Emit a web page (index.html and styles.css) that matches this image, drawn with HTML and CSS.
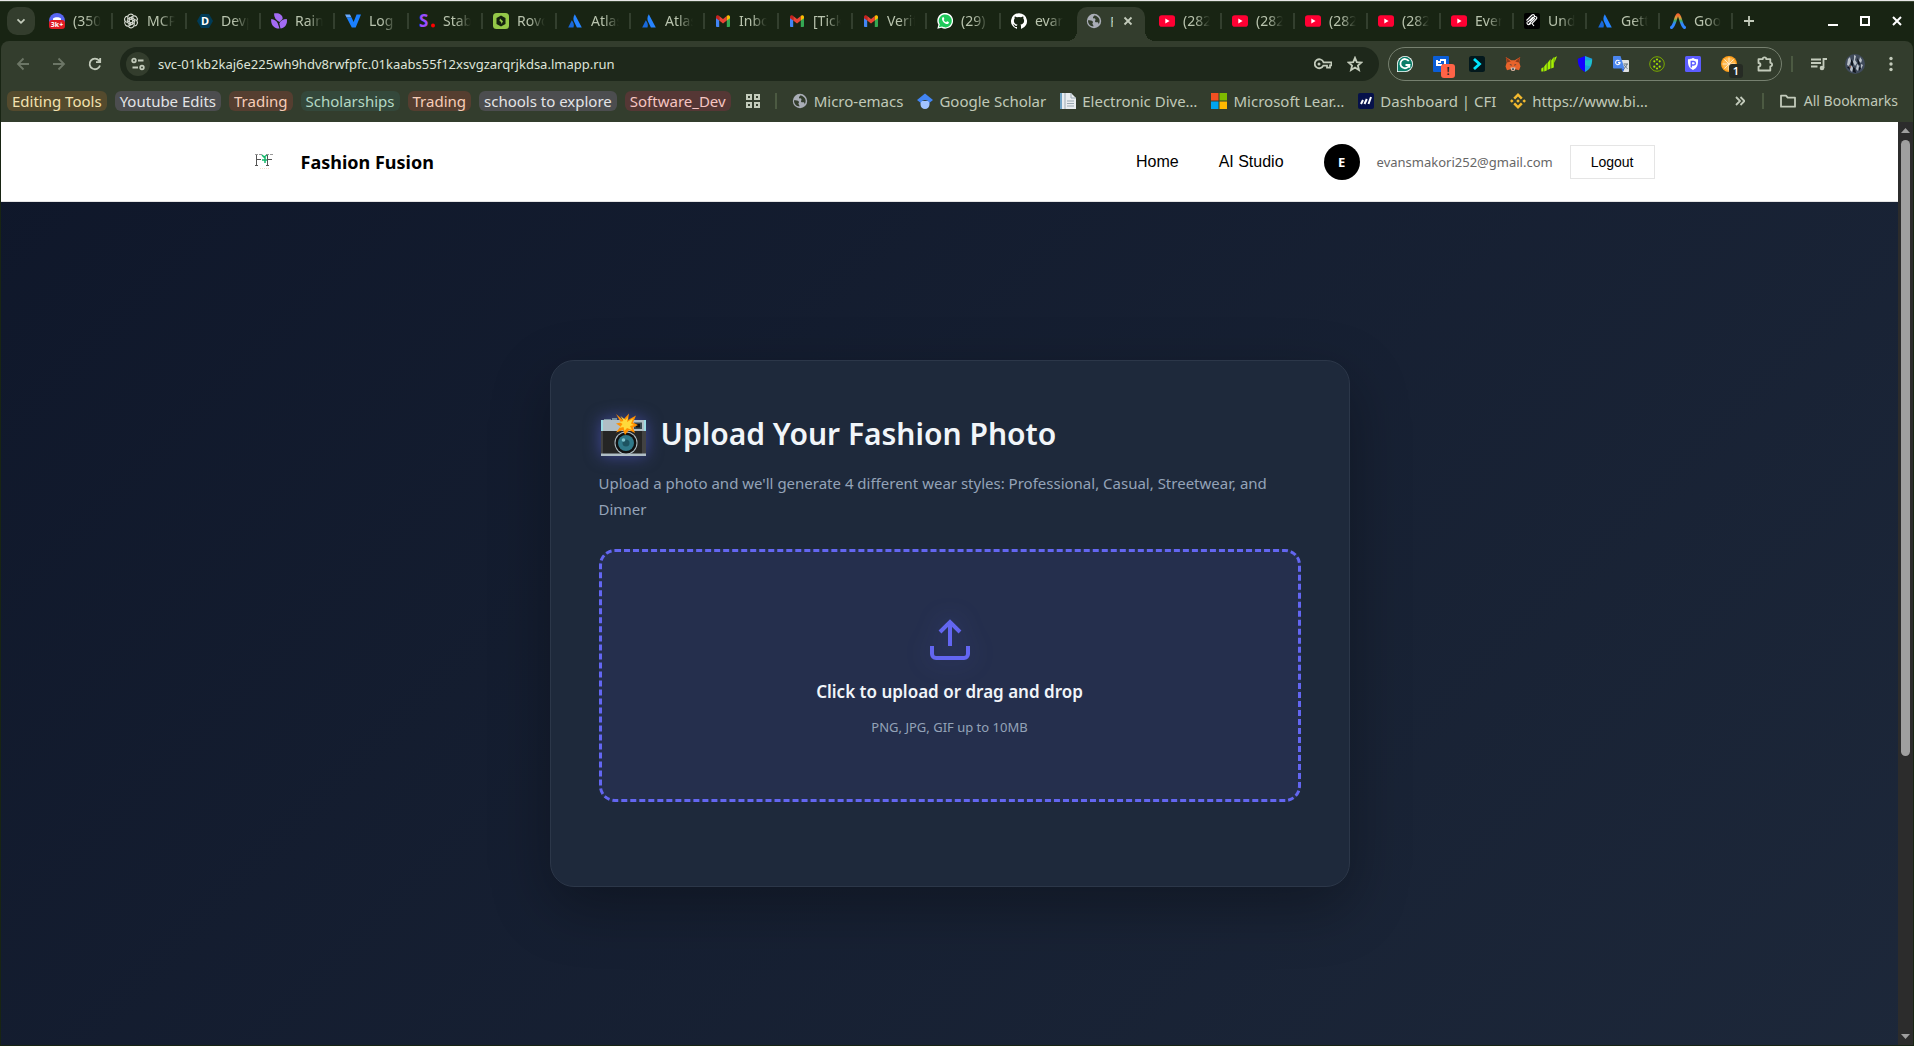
FILE: index.html
```
<!DOCTYPE html>
<html lang="en">
<head>
    <meta charset="UTF-8">
    <title>Fashion Fusion</title>
    <link rel="stylesheet" href="styles.css">
</head>
<body>

<!-- shared icons -->
<svg class="sprite" width="0" height="0" aria-hidden="true">
    <symbol id="atlassian" viewBox="0 0 16 16">
        <path fill="#2684ff" d="M7.800 1.200c-2 3.200-1.600 5.800-.3 8.400l2.400 4.900h4.900z"/>
        <path fill="#1868db" d="M4.800 7.200 1.200 14.500h5.300c.9-2.600.2-5.200-1.700-7.300z"/>
    </symbol>
    <symbol id="gmail" viewBox="0 0 16 16">
        <path fill="#4285f4" d="M1 4v9.200c0 .5.400.8.900.8h2.300V6.500z"/>
        <path fill="#34a853" d="M15 4v9.200c0 .5-.4.8-.9.800h-2.300V6.500z"/>
        <path fill="#ea4335" d="M4.200 3 8 5.900 11.800 3v4.500L8 10.400 4.200 7.500z"/>
        <path fill="#c5221f" d="M1 4c0-1.700 1.800-2.400 3.200-1.200v4.700L1 5.200z"/>
        <path fill="#fbbc04" d="M15 4c0-1.700-1.800-2.400-3.200-1.200v4.700L15 5.200z"/>
    </symbol>
    <symbol id="youtube" viewBox="0 0 16 16">
        <rect y="2.300" width="16" height="11.400" rx="2.800" fill="#ff0033"/>
        <path fill="#fff" d="M6.300 5.600v4.800L10.600 8z"/>
    </symbol>
    <symbol id="globe" viewBox="0 0 16 16">
        <circle cx="8" cy="8" r="7.200" fill="#a9adb6"/>
        <path fill="#333d2d" d="M2 7.200c2 .2 3.800 0 4.800 1.300.8 1.100-.8 1.200-.3 2.500.3.900 1 .8.900 2.400C4.500 13.400 1.800 10.800 2 7.200zM8.500 2.200c-.2 1.400-1.900 1.200-1.500 2.500.3.900 2 .3 2.400 1.400.5 1.300-.9 1.900-.2 2.800.9 1 2.400-.2 3.200 1 .3.500.2 1.100.1 1.500 2.300-3.200 1.300-7.500-4-9.200z"/>
    </symbol>
</svg>

<!-- tab strip -->
<div class="tab-strip">
    <button class="tab-search" aria-label="Search tabs">
        <svg width="12" height="12" viewBox="0 0 12 12"><path class="line" d="M2.500 4.300 6 7.800l3.500-3.500" stroke-width="2"/></svg>
    </button>
    <button class="tab">
        <svg class="favicon" viewBox="0 0 16 16"><circle cx="8" cy="8" r="8" fill="#5865f2"/><path fill="#fff" d="M4 5.500c2-1.600 6-1.600 8 0V8H4z"/><rect y="7" width="16" height="9" rx="3" fill="#e01b24"/><text x="8" y="14" font-size="7" font-weight="bold" fill="#fff" text-anchor="middle">3k+</text></svg>
        <span class="tab-title">(350</span>
    </button>
    <button class="tab">
        <svg class="favicon" viewBox="0 0 16 16"><g fill="none" stroke="#d9ddd5" stroke-width="1.100"><path id="petal" d="M4.800 9.800V4.200a3.100 3.100 0 0 1 5.800-1.500M6.300 7 10.500 4.600"/><use href="#petal" transform="rotate(60 8 8)"/><use href="#petal" transform="rotate(120 8 8)"/><use href="#petal" transform="rotate(180 8 8)"/><use href="#petal" transform="rotate(240 8 8)"/><use href="#petal" transform="rotate(300 8 8)"/></g></svg>
        <span class="tab-title">MCP</span>
    </button>
    <button class="tab">
        <svg class="favicon" viewBox="0 0 16 16"><path fill="#003b57" d="M4 1h8l4 7-4 7H4L0 8z"/><text x="8" y="12" font-size="11" font-weight="bold" fill="#fff" text-anchor="middle">D</text></svg>
        <span class="tab-title">Devp</span>
    </button>
    <button class="tab">
        <svg class="favicon" viewBox="0 0 16 16"><g fill="#a46bf5"><path d="M3 .5c5-1 9 1.500 8.600 5.500L8.500 9C5 7.500 3 4.500 3 .5z"/><path d="M15.800 6c1 5-2 9-6.300 9.500L8.300 10.500C9.500 7.500 12 6 15.800 6z"/><path d="M.3 6c3 .3 5.700 2 6.500 4.500L8.500 15.500C3.500 16-.8 11.500.3 6z"/></g></svg>
        <span class="tab-title">Rain</span>
    </button>
    <button class="tab">
        <svg class="favicon" viewBox="0 0 16 16"><path fill="#68a9ff" d="M0 1.500h5l1.500 3H1.600z"/><path fill="#1a80ff" d="M1.600 4.500h5l2 4.500 3-7.500H16L10.700 14.500H6.800z"/></svg>
        <span class="tab-title">Log</span>
    </button>
    <button class="tab">
        <svg class="favicon" viewBox="0 0 16 16"><text x="0" y="14" font-size="17" font-weight="bold" fill="#9a4dff">S</text><circle cx="14" cy="12.500" r="2" fill="#f00"/></svg>
        <span class="tab-title">Stab</span>
    </button>
    <button class="tab">
        <svg class="favicon" viewBox="0 0 16 16"><rect width="16" height="16" rx="3.500" fill="#94c748"/><path fill="#14200f" d="M8 2.500 12.500 5v6L8 13.500 3.500 11V5z"/><path fill="#94c748" d="M7 5.500 10 8.300 8.500 11 8 8.800 6.500 8z"/></svg>
        <span class="tab-title">Rovo</span>
    </button>
    <button class="tab"><svg class="favicon"><use href="#atlassian"/></svg><span class="tab-title">Atlas</span></button>
    <button class="tab"><svg class="favicon"><use href="#atlassian"/></svg><span class="tab-title">Atlas</span></button>
    <button class="tab"><svg class="favicon"><use href="#gmail"/></svg><span class="tab-title">Inbox</span></button>
    <button class="tab"><svg class="favicon"><use href="#gmail"/></svg><span class="tab-title">[Tick</span></button>
    <button class="tab"><svg class="favicon"><use href="#gmail"/></svg><span class="tab-title">Verif</span></button>
    <button class="tab">
        <svg class="favicon" viewBox="0 0 16 16"><path fill="#fff" d="M.3 15.800 1.400 11.800A7.900 7.900 0 1 1 4.400 14.700z"/><path fill="#1fc95b" d="m1.900 14.200.9-2.800a6.500 6.500 0 1 1 2.200 2.100z"/><path fill="#fff" d="M5.700 4.300c.5-.4 1-.1 1.200.5l.4 1c.1.400-.5.9-.6 1.100.6 1.100 1.400 1.800 2.500 2.300.4-.3.7-1 1.100-.9l1.500.8c.3.400-.2 1.500-.8 1.800-1.300.6-3.200-.4-4.500-1.700C5.200 7.800 4.300 5.500 5.700 4.300z"/></svg>
        <span class="tab-title">(29)</span>
    </button>
    <button class="tab before-active">
        <svg class="favicon" viewBox="0 0 16 16"><path fill="#fff" d="M8 .2a8 8 0 0 0-2.500 15.600c.4.100.5-.2.500-.4v-1.500c-2.200.5-2.700-1-2.700-1-.4-.9-.9-1.200-.9-1.200-.7-.5.100-.5.100-.5.800.1 1.200.8 1.200.8.700 1.200 1.900.9 2.300.7.100-.5.300-.9.500-1.100-1.800-.2-3.600-.9-3.600-4 0-.9.300-1.600.8-2.100-.1-.2-.4-1 .1-2.100 0 0 .7-.2 2.200.8a7.600 7.600 0 0 1 4 0c1.500-1 2.200-.8 2.200-.8.4 1.100.2 1.900.1 2.100.5.600.8 1.300.8 2.100 0 3.100-1.900 3.800-3.700 4 .3.300.6.800.6 1.500v2.300c0 .2.100.5.500.4A8 8 0 0 0 8 .2z"/></svg>
        <span class="tab-title">evans</span>
    </button>
    <button class="tab active">
        <svg class="favicon"><use href="#globe"/></svg>
        <span class="tab-title">F</span>
        <svg width="10" height="10" viewBox="0 0 10 10"><path class="line" d="m1.500 1.500 7 7m0-7-7 7" stroke-width="2"/></svg>
    </button>
    <button class="tab slim"><svg class="favicon"><use href="#youtube"/></svg><span class="tab-title">(282</span></button>
    <button class="tab slim"><svg class="favicon"><use href="#youtube"/></svg><span class="tab-title">(282</span></button>
    <button class="tab slim"><svg class="favicon"><use href="#youtube"/></svg><span class="tab-title">(282</span></button>
    <button class="tab slim"><svg class="favicon"><use href="#youtube"/></svg><span class="tab-title">(282</span></button>
    <button class="tab slim"><svg class="favicon"><use href="#youtube"/></svg><span class="tab-title">Even</span></button>
    <button class="tab slim">
        <svg class="favicon" viewBox="0 0 16 16"><rect width="16" height="16" rx="2" fill="#000"/><path fill="none" stroke="#fff" stroke-width="1.100" d="M2.500 7.500 8 2c1.600-1.200 3.300.5 2 2L6 8m4-4c1.600-1.300 3.700.5 2.400 2L8 10.500l2 2.500M4 9l5-5M5 11l6-5.800M3.500 8.500C2 10.500 4 12.500 6 11l1-.8"/></svg>
        <span class="tab-title">Und</span>
    </button>
    <button class="tab slim"><svg class="favicon"><use href="#atlassian"/></svg><span class="tab-title">Gett</span></button>
    <button class="tab slim">
        <svg class="favicon" viewBox="0 0 16 16">
            <defs><linearGradient id="peak" x1="0" y1="0" x2="0" y2="1"><stop offset="0" stop-color="#f4662f"/><stop offset=".25" stop-color="#e0a03a"/><stop offset=".45" stop-color="#3fae6a"/><stop offset=".7" stop-color="#3186ff"/></linearGradient></defs>
            <path fill="none" stroke="url(#peak)" stroke-width="3" stroke-linecap="round" d="M1.500 14.500C5.500 11.500 5.500 1.800 8 1.800s2.500 9.700 6.500 12.700"/>
        </svg>
        <span class="tab-title">Goo</span>
    </button>
    <button class="new-tab" aria-label="New tab">
        <svg width="12" height="12" viewBox="0 0 12 12"><path class="line" d="M6 1v10M1 6h10" stroke-width="2"/></svg>
    </button>
    <div class="window-controls">
        <button aria-label="Minimize"><svg width="10" height="10" viewBox="0 0 10 10"><path fill="#fff" d="M0 8h10v2H0z"/></svg></button>
        <button aria-label="Maximize"><svg width="10" height="10" viewBox="0 0 10 10"><path fill="none" stroke="#fff" stroke-width="2" d="M1 1h8v8H1z"/></svg></button>
        <button aria-label="Close"><svg width="10" height="10" viewBox="0 0 10 10"><path stroke="#fff" stroke-width="2" d="m1 1 8 8m0-8-8 8"/></svg></button>
    </div>
</div>

<!-- address bar -->
<div class="toolbar">
    <div class="nav-buttons">
        <button class="dim" aria-label="Back"><svg width="16" height="16" viewBox="0 0 16 16"><path class="line" d="M14 8H3m5.500-5.500L3 8l5.500 5.500"/></svg></button>
        <button class="dim" aria-label="Forward"><svg width="16" height="16" viewBox="0 0 16 16"><path class="line" d="M2 8h11M7.500 2.500 13 8l-5.500 5.500"/></svg></button>
        <button aria-label="Reload"><svg width="16" height="16" viewBox="0 0 16 16"><path class="line" d="M13 9.500A5.300 5.300 0 1 1 12 4.500L13 5.700M13.200 2v4.200H9"/></svg></button>
    </div>
    <div class="omnibox">
        <button class="site-info" aria-label="View site information">
            <svg width="14" height="14" viewBox="0 0 14 14"><path class="line" d="M7 3.500h5.500M1.500 10.500H7"/><circle class="line" cx="3" cy="3.500" r="1.800"/><circle class="line" cx="11" cy="10.500" r="1.800"/></svg>
        </button>
        <input class="url" type="text" aria-label="Address" value="svc-01kb2kaj6e225wh9hdv8rwfpfc.01kaabs55f12xsvgzarqrjkdsa.lmapp.run">
        <button aria-label="Manage passwords"><svg width="18" height="16" viewBox="0 0 18 16"><path class="line" d="M9.500 6.300h8v3H16v2.300h-3V9.700H9.300A4.500 4.500 0 1 1 9.500 6.300z"/><circle cx="5" cy="8" r="1.500" fill="#c3cbbb"/></svg></button>
        <button aria-label="Bookmark this tab"><svg width="16" height="16" viewBox="0 0 16 16"><path class="line" d="m8 1.800 1.800 4.300 4.600.4-3.500 3 1.100 4.600-4-2.500-4 2.500 1.100-4.600-3.500-3 4.600-.4z"/></svg></button>
    </div>
    <div class="extensions">
        <button aria-label="Grammarly"><svg class="favicon" viewBox="0 0 16 16"><path fill="#fff" d="M8 0a8 8 0 1 1 0 16H0V8a8 8 0 0 1 8-8z"/><path fill="#0c7d69" d="M8 .8A7.200 7.200 0 1 1 8 15.200H.8V8A7.200 7.200 0 0 1 8 .8z"/><path fill="none" stroke="#fff" stroke-width="1.800" d="M11.800 5A4.600 4.600 0 1 0 12.400 9H8.500m3.900-.5v3.300"/></svg></button>
        <button class="badged" aria-label="Jira"><svg class="favicon" viewBox="0 0 16 16"><rect width="16" height="16" rx="1" fill="#0b5ed7"/><path fill="none" stroke="#fff" stroke-width="2" d="M4 4v5h5M7 4h5v4M4 6h4"/></svg><span class="badge alert">!</span></button>
        <button aria-label="Prompt"><svg class="favicon" viewBox="0 0 16 16"><rect width="16" height="16" rx="2.500" fill="#03181c"/><path fill="none" stroke="#00e5ff" stroke-width="2.800" d="m5 3 5.500 5L5 13"/></svg></button>
        <button aria-label="MetaMask"><svg class="favicon" viewBox="0 0 16 16"><path fill="#e8632b" d="m.8 1 5.400 3.200h3.600L15.200 1l-.9 5.500 1.200 4-1.500 3.700-3.500-.9-1.500 1.400H7l-1.500-1.400-3.500.9L.5 10.500l1.200-4z"/><path fill="#8f3a1a" d="m.8 1 5 4.500-3.600 1zM15.200 1l-5 4.500 3.600 1z"/><path fill="#cfc6bd" d="M5.500 11.500h5l-1 3.200h-3z"/><path fill="#22303c" d="M4.500 8.500h2v1.300zM11.500 8.500h-2v1.300zM7 12.500h2v1.200H7z"/></svg></button>
        <button aria-label="Analytics"><svg class="favicon" viewBox="0 0 16 16"><g fill="#a4f000"><path d="M.3 12.500 2.500 11v4.500H.3zM3.200 10.500 5.800 7v7.500l-2.600 1zM6.500 7l3-4v9.500l-3 1.500zM10.200 4.500 12.800 1v10.500l-2.600 1zM13.300 1.500 16 .300 13.300 7z"/></g></svg></button>
        <button aria-label="Shield"><svg class="favicon" viewBox="0 0 16 16"><path fill="#1500ff" d="M8 0v16C3 13.500.8 10 .8 2.800z"/><path fill="#19a3e0" d="M8 0v16c5-2.500 7.200-6 7.200-13.200z"/><path fill="#23d6bb" d="M8 4.500 15 4c-.3 3-.8 5-2 6.500L8 9z" opacity=".6"/></svg></button>
        <button aria-label="Google Translate"><svg class="favicon" viewBox="0 0 16 16"><path fill="#e0e2e4" d="M7 4h8.200c.5 0 .8.300.8.800V15c0 .6-.3 1-.8 1H10z"/><path fill="#4b86ee" d="M.8 0h6.700l4 12.500H.8c-.5 0-.8-.3-.8-.8V.8C0 .3.300 0 .8 0z"/><path fill="#285fd0" d="M8 12.500h3.500L10 16z"/><path fill="none" stroke="#fff" stroke-width="1.100" d="M6.500 5.100A2.200 2.200 0 1 0 7 6.600H5"/><path fill="none" stroke="#5f6f7c" d="M10.500 8H15m-1 0c-.3 2-1.500 3.500-3 4.500M11.500 9c.5 1.500 1.500 2.500 3 3.500"/></svg></button>
        <button aria-label="Network"><svg class="favicon" viewBox="0 0 16 16"><circle cx="8" cy="8" r="7.300" fill="none" stroke="#7aa800"/><g fill="#a4e000"><circle cx="8" cy="3.500" r="1.100"/><circle cx="5.300" cy="5.300" r="1.100"/><circle cx="10.700" cy="5.300" r="1.100"/><circle cx="8" cy="8" r="1.100"/><circle cx="5.300" cy="10.700" r="1.100"/><circle cx="10.700" cy="10.700" r="1.100"/><circle cx="8" cy="12.500" r="1.100"/></g></svg></button>
        <button aria-label="Privacy"><svg class="favicon" viewBox="0 0 16 16"><rect width="16" height="16" rx="1.500" fill="#5c5cff"/><path fill="#fff" d="M3 3.300c3.500 0 4-1.300 5-1.300s1.500 1.300 5 1.300c.3 5-.5 8.700-5 10.700-4.500-2-5.300-5.700-5-10.700z"/><path fill="none" stroke="#5c5cff" stroke-width="1.500" d="M6.300 11.500V5.500h2.400a1.700 1.700 0 0 1 0 3.500H6.300"/></svg></button>
        <button class="badged" aria-label="Orange"><svg class="favicon" viewBox="0 0 16 16"><circle cx="8" cy="8" r="8" fill="#ff9f1c"/><circle cx="8" cy="8" r="6.500" fill="#ffb84d"/><path stroke="#ffe9c4" d="M8 1.500v13M1.500 8h13M3.400 3.400l9.200 9.200m0-9.200-9.200 9.200"/></svg><span class="badge count">1</span></button>
        <button aria-label="Extensions"><svg class="favicon" viewBox="0 0 16 16"><path class="line" stroke-linejoin="round" d="M1.500 3.200h4.200a1.800 1.800 0 0 1 3.600 0h4v3.600a1.800 1.800 0 0 1 0 3.600v4.100H1.500v-3.800c2.600 0 2.600-3.700 0-3.700z"/></svg></button>
    </div>
    <span class="divider"></span>
    <div class="profile-buttons">
        <button aria-label="Media controls"><svg width="16" height="16" viewBox="0 0 16 16"><path class="line" d="M0 3.500h10M0 7h10M0 10.500h6.500M12.500 12V3H16"/><circle cx="11" cy="12" r="2.300" fill="#c3cbbb"/></svg></button>
        <button aria-label="Profile"><svg width="20" height="20" viewBox="0 0 20 20"><circle cx="10" cy="10" r="10" fill="#404b5b"/><path fill="#b9c0c8" d="m3 5 2-2 1 4-2 5-2-1zM9 1l2 1-1 4 2 3-2 3-2-4 1-3zM15 3l2 3-1 3-2-2zM6 11l2 3-1 4-2-2zM12 10l2 2-1 5-2-2zM16 10l2 1-2 4z"/><path fill="#10151c" d="m6 5 2 3v4l-2-1zM12 4l2 3 1 4-2-1zM8 13l2 1 1 5-3-1zM14 13l2 1-2 3zM2 13l2 0 1 3z"/><path fill="#a0604a" d="m4 12 2 0 0 2z"/></svg></button>
        <button aria-label="Menu"><svg width="16" height="16" viewBox="0 0 16 16"><g fill="#c3cbbb"><circle cx="8" cy="2.500" r="1.700"/><circle cx="8" cy="8" r="1.700"/><circle cx="8" cy="13.500" r="1.700"/></g></svg></button>
    </div>
</div>

<!-- bookmarks bar -->
<nav class="bookmarks">
    <div class="groups">
        <button class="chip yellow">Editing Tools</button>
        <button class="chip grey">Youtube Edits</button>
        <button class="chip orange">Trading</button>
        <button class="chip green">Scholarships</button>
        <button class="chip orange">Trading</button>
        <button class="chip grey">schools to explore</button>
        <button class="chip red">Software_Dev</button>
    </div>
    <button class="apps" aria-label="Apps"><svg width="14" height="14" viewBox="0 0 14 14"><path fill="none" stroke="#c3cbbb" stroke-width="2" d="M1 1h4v4H1zM9 1h4v4H9zM1 9h4v4H1zM9 9h4v4H9z"/></svg></button>
    <span class="divider"></span>
    <div class="links">
        <a href="#"><svg class="favicon"><use href="#globe"/></svg>Micro-emacs</a>
        <a href="#"><svg class="favicon" viewBox="0 0 16 16"><path fill="#a0c3ff" d="M3.500 8h9v3.500a4.500 4.500 0 0 1-9 0z"/><path fill="#4285f4" d="M8 .5 16 7l-3.500 2.800a5 5 0 0 0-9 0L0 7z"/></svg>Google Scholar</a>
        <a href="#"><svg class="favicon" viewBox="0 0 16 16"><path fill="#e9edf0" d="M0 0h11l5 5v11H0z"/><path fill="#6fa3c4" d="M0 0h2v16H0z"/><path stroke="#9aa9b3" d="M5 0v16M7 8h7m-7 2.500h7M7 13h7M11 0v5h5" fill="none"/></svg>Electronic Dive…</a>
        <a href="#"><svg class="favicon" viewBox="0 0 16 16"><path fill="#f25022" d="M0 0h7.500v7.500H0z"/><path fill="#7fba00" d="M8.500 0H16v7.500H8.500z"/><path fill="#00a4ef" d="M0 8.500h7.500V16H0z"/><path fill="#ffb900" d="M8.500 8.500H16V16H8.500z"/></svg>Microsoft Lear…</a>
        <a href="#"><svg class="favicon" viewBox="0 0 16 16"><rect width="16" height="16" rx="2" fill="#06114a"/><path stroke="#fff" stroke-width="2" d="m3 11 2-4m1.500 4 2.300-5m1.700 5L13 4"/></svg>Dashboard | CFI</a>
        <a href="#"><svg class="favicon" viewBox="0 0 16 16"><path fill="#f3ba2f" d="m8 0 4.700 4.700-1.800 1.700L8 3.500 5.100 6.400 3.300 4.700zM8 16l4.700-4.700-1.800-1.700L8 12.500 5.100 9.600l-1.800 1.700zM1.800 6.200 3.600 8 1.800 9.800 0 8zM14.200 6.200 16 8l-1.800 1.800L12.400 8zM8 6.200 9.800 8 8 9.800 6.200 8z"/></svg>https://www.bi…</a>
    </div>
    <button class="more" aria-label="More bookmarks"><svg width="10" height="10" viewBox="0 0 10 10"><path class="line" d="m1 1 4 4-4 4m4.500-8 4 4-4 4" stroke-width="1.500"/></svg></button>
    <span class="divider"></span>
    <button class="all-bookmarks">
        <svg width="16" height="16" viewBox="0 0 16 16"><path class="line" stroke-linejoin="round" d="M1 2.700h5l1.700 2H15v9H1z"/></svg>
        All Bookmarks
    </button>
</nav>

<div class="window">
    <div class="page">
        <header class="header">
            <div class="header-inner">
                <div class="brand">
                    <svg width="40" height="40" viewBox="0 0 40 40" aria-label="Fashion Fusion logo">
                        <path fill="none" stroke="#555" d="M11.500 12v11M12 17.500h4M22.500 12v11M23 17.500h4M10 23.500h3M21 23.500h3"/>
                        <path fill="none" stroke="#999" d="M10 12.500h7M21 12.500h7" stroke-dasharray="3 1"/>
                        <path fill="none" stroke="#12b76a" stroke-width="1.500" d="m17 13 2 2 3-2m-5 5h5m-2-3v6"/>
                        <path stroke="#f3dccb" stroke-dasharray="1 1" d="M15 26.500h9"/>
                    </svg>
                    <span class="brand-name">Fashion Fusion</span>
                </div>
                <nav class="menu">
                    <a href="#">Home</a>
                    <a href="#">AI Studio</a>
                    <div class="user">
                        <span class="avatar">E</span>
                        <span class="email">evansmakori252@gmail.com</span>
                        <button class="logout">Logout</button>
                    </div>
                </nav>
            </div>
        </header>

        <main class="main">
            <section class="card">
                <div class="card-title">
                    <svg class="camera" width="48" height="48" viewBox="0 0 48 48" aria-hidden="true">
                        <path fill="#78909c" d="M5 9h7v4H5zM13 8h5v4h-5z"/>
                        <rect x="2" y="10" width="45" height="36" rx="1" fill="#252525"/>
                        <path fill="#b0bec5" d="M2 10h45v11H2z"/>
                        <path fill="#9bdbe3" d="M2 10h2v11H2zM45 10h2v11h-2z"/>
                        <path fill="#424242" d="M2 21h2v23H2zM43 21h4v23h-4z"/>
                        <path fill="#b0bec5" d="M2 43.500h45V46H2z"/>
                        <rect x="35" y="12.500" width="8" height="6.500" fill="#37474f"/>
                        <rect x="37" y="14" width="4" height="3.500" fill="#111"/>
                        <circle cx="27" cy="33" r="11.500" fill="#b0bec5"/>
                        <circle cx="27" cy="33" r="10.500" fill="#101010"/>
                        <circle cx="27" cy="33" r="8" fill="#2f7889"/>
                        <circle cx="27" cy="33" r="3.500" fill="#1d5361"/>
                        <circle cx="24.500" cy="30" r="1.800" fill="#7fc4cf"/>
                        <path fill="#ff8f00" d="m30 3.500-1 6.500 8-4.500-3 7 5 2.500-5 2.500 2 5.500-6-3-4 5-2-5-7 2.500 4.500-6-4.500-3 5-1L17 4l7 6z"/>
                        <path fill="#ffd93b" d="m29 7-1 5 6-3.500-2 5 3 1.500-4 1 2 4-5-2-2.500 3-1-4-4 1 3-4-3-2 4-1-3-5 5 4z"/>
                    </svg>
                    <h1>Upload Your Fashion Photo</h1>
                </div>
                <p class="intro">Upload a photo and we'll generate 4 different wear styles: Professional, Casual, Streetwear, and Dinner</p>
                <label class="dropzone">
                    <input class="file-input" type="file" accept="image/*">
                    <svg class="upload-icon" width="48" height="48" viewBox="0 0 24 24"><path d="M21 15v4a2 2 0 0 1-2 2H5a2 2 0 0 1-2-2v-4M17 8l-5-5-5 5M12 3v12"/></svg>
                    <span class="drop-text">Click to upload or drag and drop</span>
                    <span class="drop-hint">PNG, JPG, GIF up to 10MB</span>
                </label>
            </section>
        </main>
    </div>
    <div class="scrollbar">
        <svg width="9" height="5" viewBox="0 0 9 5"><path fill="#9f9f9f" d="M0 5h9L4.500 0z"/></svg>
        <div class="track"><div class="thumb"></div></div>
        <svg width="9" height="5" viewBox="0 0 9 5"><path fill="#9f9f9f" d="M0 0h9L4.500 5z"/></svg>
    </div>
</div>

</body>
</html>
```
FILE: styles.css
```
* {
    box-sizing: border-box;
}
body {
    margin: 0;
    height: 100vh;
    display: flex;
    flex-direction: column;
    overflow: hidden;
    font-family: "Noto Sans", sans-serif;
    background: #182413;
    border-top: 1px solid #e8e8e8;
}
button {
    display: flex;
    align-items: center;
    justify-content: center;
    padding: 0;
    border: 0;
    background: none;
    font: inherit;
    color: inherit;
    cursor: pointer;
}
a {
    color: inherit;
    text-decoration: none;
}
svg {
    flex: none;
    display: block;
}
.sprite {
    position: absolute;
}
.line {
    fill: none;
    stroke: #c3cbbb;
    stroke-width: 1.8;
}
.favicon {
    width: 16px;
    height: 16px;
}
.divider {
    flex: none;
    width: 2px;
    height: 16px;
    background: #4c5a42;
}

/* tab strip */
.tab-strip {
    display: flex;
    align-items: center;
    height: 40px;
    padding: 0 0 2px 7px;
    font-size: 14px;
    color: #b9c4ae;
    border-top: 1px solid #3c4a36;
}
.tab-search {
    flex: none;
    width: 28px;
    height: 28px;
    margin-right: 4px;
    border-radius: 10px;
    background: #333d2d;
}
.tab {
    flex: 0 1 74px;
    min-width: 0;
    height: 36px;
    padding-left: 10px;
    gap: 8px;
}
.tab.slim {
    flex-basis: 73px;
}
.tab::after {
    content: "";
    width: 2px;
    height: 16px;
    background: #333f2e;
}
.tab-title {
    flex: 1;
    overflow: hidden;
    white-space: nowrap;
    text-align: left;
    margin-right: 2px;
    -webkit-mask-image: linear-gradient(to right, #000 45%, transparent);
    mask-image: linear-gradient(to right, #000 45%, transparent);
}
.tab.before-active::after {
    background: none;
}
.tab.active {
    position: relative;
    flex-basis: 68px;
    align-self: flex-end;
    height: 34px;
    margin: 0 4px -2px 2px;
    padding: 0 12px 6px 9px;
    border-radius: 10px 10px 0 0;
    background: #333d2d;
}
.tab.active .tab-title {
    -webkit-mask-image: none;
    mask-image: none;
}
/* flared feet of the open tab */
.tab.active::before,
.tab.active::after {
    position: absolute;
    bottom: 0;
    width: 10px;
    height: 10px;
    content: "";
}
.tab.active::before {
    right: 100%;
    background: radial-gradient(circle at 0 0, #182413 10px, #333d2d 10px);
}
.tab.active::after {
    left: 100%;
    background: radial-gradient(circle at 100% 0, #182413 10px, #333d2d 10px);
}
.new-tab {
    width: 32px;
    height: 28px;
}
.window-controls {
    display: flex;
    gap: 22px;
    margin-left: auto;
    padding-right: 12px;
}

/* address bar */
.toolbar {
    display: flex;
    align-items: center;
    height: 46px;
    margin: 0 1px;
    padding-right: 14px;
    border-radius: 8px 8px 0 0;
    background: #333d2d;
}
.nav-buttons {
    display: flex;
    gap: 20px;
    padding: 0 17px 0 14px;
}
.dim {
    opacity: 0.4;
}
.omnibox {
    flex: 1;
    display: flex;
    align-items: center;
    gap: 15px;
    height: 34px;
    padding: 0 16px 0 6px;
    border-radius: 17px;
    background: #1e281b;
}
.site-info {
    width: 24px;
    height: 24px;
    margin-right: -7px;
    border-radius: 50%;
    background: #333d2d;
}
.url {
    flex: 1;
    min-width: 0;
    padding: 0;
    border: 0;
    outline: 0;
    background: none;
    font: inherit;
    font-size: 13px;
    color: #dfe4d9;
}
.extensions {
    display: flex;
    align-items: center;
    gap: 20px;
    height: 34px;
    margin: 0 9px;
    padding: 0 8px;
    border: 1px solid #76806f;
    border-radius: 17px;
}
.badged {
    position: relative;
}
.badge {
    position: absolute;
    left: 8px;
    top: 8px;
    width: 14px;
    height: 14px;
    border-radius: 3px;
    font-size: 11px;
    font-weight: 600;
    line-height: 14px;
}
.alert {
    background: #ff6347;
    color: #222;
}
.count {
    background: #262b24;
    color: #fff;
}
.profile-buttons {
    display: flex;
    align-items: center;
    gap: 18px;
    margin-left: 18px;
}

/* bookmarks bar */
.bookmarks {
    display: flex;
    align-items: center;
    height: 35px;
    margin: 0 1px;
    padding: 0 15px 8px 6px;
    font-size: 15px;
    color: #c0c9b8;
    background: #333d2d;
}
.groups {
    display: flex;
    gap: 8px;
}
.chip {
    height: 20px;
    padding: 0 5px;
    border-radius: 6px;
    white-space: nowrap;
}
.yellow {
    background: #544a2d;
    color: #f3e2b0;
}
.grey {
    background: #4c4d4f;
    color: #e3e4e6;
}
.orange {
    background: #553e30;
    color: #f6cdb8;
}
.green {
    background: #34483b;
    color: #b5d8c4;
}
.red {
    background: #553735;
    color: #f5c5c2;
}
.apps {
    margin: 0 15px;
}
.links {
    display: flex;
    gap: 14px;
    margin-left: 15px;
}
.links a {
    display: flex;
    align-items: center;
    gap: 6px;
    white-space: nowrap;
}
.more {
    margin: 0 17px 0 auto;
}
.all-bookmarks {
    margin-left: 16px;
    gap: 8px;
    font-size: 14px;
}

/* web page */
.window {
    flex: 1;
    display: flex;
    min-height: 0;
    border: 1px solid #182413;
    border-top: 0;
}
.page {
    flex: 1;
    display: flex;
    flex-direction: column;
    background: linear-gradient(135deg, #0f172a 0%, #1e293b 110%);
}
.header {
    height: 80px;
    background: #fff;
    border-bottom: 1px solid #e5e5e5;
}
.header-inner {
    display: flex;
    align-items: center;
    justify-content: space-between;
    max-width: 1410px;
    height: 100%;
    margin: 0 auto;
}
.brand {
    display: flex;
    align-items: center;
    gap: 16px;
}
.brand-name {
    font-size: 18px;
    font-weight: bold;
    color: #000;
}
.menu {
    display: flex;
    align-items: center;
    gap: 40px;
    font: 16px "Liberation Sans", Arial, sans-serif;
    color: #000;
}
.user {
    display: flex;
    align-items: center;
    gap: 17px;
}
.avatar {
    width: 36px;
    height: 36px;
    border-radius: 50%;
    background: #000;
    color: #fff;
    font: bold 13px/36px "Noto Sans", sans-serif;
    text-align: center;
}
.email {
    font: 13px "Noto Sans", sans-serif;
    color: #666;
}
.logout {
    height: 34px;
    padding: 0 20px;
    border: 1px solid #e5e5e5;
    background: #fff;
    font-size: 14px;
}
.main {
    flex: 1;
    display: flex;
    align-items: center;
    justify-content: center;
}
.card {
    width: 100%;
    max-width: 800px;
    padding: 48px;
    border: 1px solid #2c3749;
    border-radius: 24px;
    background: #1e293b;
    box-shadow: 0 20px 60px rgba(0, 0, 0, 0.3);
}
.card-title {
    display: flex;
    align-items: center;
    gap: 14px;
    height: 50px;
    margin-bottom: 11px;
}
.camera {
    filter: drop-shadow(0 0 8px rgba(99, 102, 241, 0.5));
}
h1 {
    margin: 0;
    font-size: 30px;
    font-weight: 600;
    line-height: 50px;
    color: #f1f5f9;
}
.intro {
    margin: 0 0 27px;
    font-size: 15px;
    line-height: 26px;
    color: #94a3b8;
}
.dropzone {
    display: flex;
    flex-direction: column;
    align-items: center;
    margin-bottom: 36px;
    padding: 64px 64px 62px;
    border: 3px dashed #6366f1;
    border-radius: 16px;
    background: #252f4d;
    cursor: pointer;
}
.file-input {
    position: absolute;
    width: 1px;
    height: 1px;
    opacity: 0;
}
.upload-icon {
    margin-bottom: 16px;
    fill: none;
    stroke: #6366f1;
    stroke-width: 2;
    filter: drop-shadow(0 0 12px rgba(99, 102, 241, 0.3));
}
.drop-text {
    margin-bottom: 13px;
    font-size: 17px;
    font-weight: 600;
    line-height: 24px;
    color: #f1f5f9;
}
.drop-hint {
    font-size: 13px;
    line-height: 20px;
    color: #94a3b8;
}

/* scrollbar */
.scrollbar {
    display: flex;
    flex-direction: column;
    align-items: center;
    width: 15px;
    padding: 6px 0;
    gap: 7px;
    background: #2c2c2c;
}
.track {
    flex: 1;
}
.thumb {
    width: 9px;
    height: 69.4%;
    border-radius: 5px;
    background: #9f9f9f;
}
```
